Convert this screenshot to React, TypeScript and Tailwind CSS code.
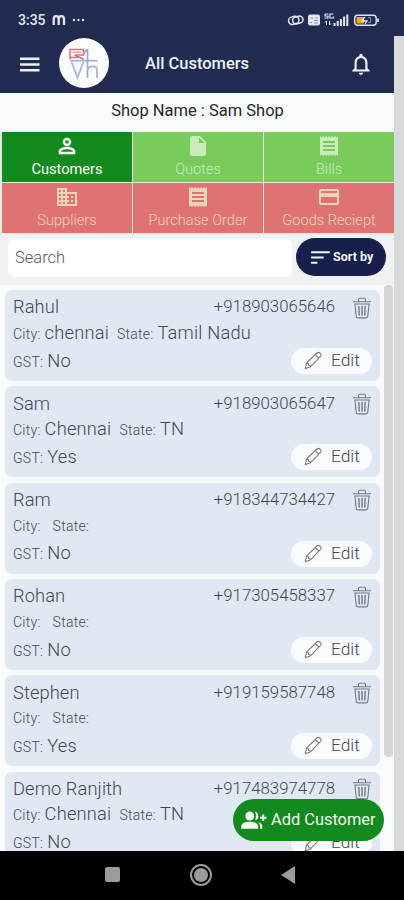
import { memo, type ReactNode } from "react";
import {
  MdCreditCard,
  MdDomain,
  MdInsertDriveFile,
  MdNotificationsNone,
  MdPersonOutline,
  MdReceipt,
  MdSort,
} from "react-icons/md";
import { clsx } from "clsx";

type Customer = {
  name: string;
  phone: string;
  city: string;
  state: string;
  gst: string;
};

const customers: Customer[] = [
  { name: "Rahul", phone: "+918903065646", city: "chennai", state: "Tamil Nadu", gst: "No" },
  { name: "Sam", phone: "+918903065647", city: "Chennai", state: "TN", gst: "Yes" },
  { name: "Ram", phone: "+918344734427", city: "", state: "", gst: "No" },
  { name: "Rohan", phone: "+917305458337", city: "", state: "", gst: "No" },
  { name: "Stephen", phone: "+919159587748", city: "", state: "", gst: "Yes" },
  { name: "Demo Ranjith", phone: "+917483974778", city: "Chennai", state: "TN", gst: "No" },
];

const tabs: { label: string; icon: ReactNode; className: string }[] = [
  {
    label: "Customers",
    icon: (
      <MdPersonOutline className="[&>path:not([fill=none])]:stroke-current [&>path:not([fill=none])]:stroke-[0.6px]" />
    ),
    className: "bg-[#128a1e] text-white",
  },
  { label: "Quotes", icon: <MdInsertDriveFile />, className: "bg-[#7acb5c] text-[#c9ecbb] font-light" },
  { label: "Bills", icon: <MdReceipt />, className: "bg-[#7acb5c] text-[#c9ecbb] font-light" },
  { label: "Suppliers", icon: <MdDomain />, className: "bg-[#df7374] text-[#ead5b8] font-light" },
  { label: "Purchase Order", icon: <MdReceipt />, className: "bg-[#df7374] text-[#ead5b8] font-light" },
  { label: "Goods Reciept", icon: <MdCreditCard />, className: "bg-[#df7374] text-[#ead5b8] font-light" },
];

const StatusBar = () => (
  <div className="h-[36px] shrink-0 flex items-center pt-[4px] pl-[18px] pr-[24px] bg-[#212b50] text-[#e3e6ee]">
    <span className="text-[14px] leading-none font-medium w-[28px]">3:35</span>
    <svg className="ml-[6px]" width="14" height="12" viewBox="0 0 14 12" fill="none" stroke="currentColor" strokeWidth="2.3">
      <path d="M1.7 11V5.2C1.7 1 6.7 1 6.7 5.2V11M6.7 5.2C6.7 1 12 1 12 5.2V11" />
    </svg>
    <svg className="ml-[6px] mb-px" width="14" height="4" viewBox="0 0 14 4" fill="currentColor">
      <circle cx="2" cy="2" r="1.2" />
      <circle cx="6.5" cy="2" r="1.2" />
      <circle cx="11" cy="2" r="1.2" />
    </svg>
    <svg className="ml-auto" width="93" height="16" viewBox="0 0 93 16" fill="none" stroke="currentColor">
      <g strokeWidth="1.5" transform="rotate(-15 9 8)">
        <rect x="1.5" y="4" width="10.5" height="7.5" rx="3.75" />
        <rect x="5.5" y="5" width="10.5" height="7" rx="3.5" />
      </g>
      <rect x="21" y="2.5" width="12" height="11" rx="2" fill="currentColor" stroke="none" />
      <path d="M23 6h3M28 6h3M23 10.5h2M27 8.5h4M27 11h4" stroke="#7d859c" strokeWidth=".8" />
      <path d="M38 2h3.5M38 2v2h3v2h-3.5M46.5 2h-3.5v4h3.5V4.5" strokeWidth="1.2" />
      <path d="M39.5 13v-4l-1.5 1.5M42.5 9v4l1.5-1.5" strokeWidth="1" />
      <path d="M47.5 14v-3M50.7 14V9M53.9 14V7M57.1 14V4.5M60.3 14V2.5" strokeWidth="2" />
      <rect x="67.7" y="3.2" width="21.5" height="10" rx="3" strokeWidth="1.4" />
      <path d="M69.5 5h7.5v6.5h-7.5z" fill="#f6a623" stroke="none" />
      <path d="M78 5l-3 4h5l-2 3" strokeWidth="1.3" />
      <path d="M81 5.5h2.5v5h-2.5" stroke="#8e96ae" />
      <path d="M91 6.5v3.5" strokeWidth="1.7" />
    </svg>
  </div>
);

const MenuIcon = () => (
  <svg width="20" height="15" viewBox="0 0 20 15" fill="none" stroke="currentColor" strokeWidth="2.4">
    <path d="M0 1.7h19.5M0 7.5h19.5M0 13.3h19.5" />
  </svg>
);

const Logo = () => (
  <div className="size-[50px] rounded-full bg-[#fdfdfe] grid place-items-center">
    <svg width="50" height="50" viewBox="0 0 50 50" fill="none">
      <path d="M11 21.5V11.5H24.5V17H15.5L25 21.5M11 19.5H18" stroke="#e0717c" strokeWidth="1.6" />
      <path d="M13.5 14.2H22" stroke="#e9939b" strokeWidth="1.4" />
      <path d="M28.5 11V40M28 11.5L23 18" stroke="#9aa9bf" strokeWidth="1.7" />
      <path d="M11 22.7H38.5" stroke="#a2b3c9" strokeWidth="1.8" />
      <path d="M12.5 24L18.5 39.5L24.5 24M28.5 32Q29.5 28.5 33 28.5H35Q38 28.5 38 31.5V40" stroke="#a9b9cd" strokeWidth="1.8" />
    </svg>
  </div>
);

const TrashIcon = () => (
  <svg width="20" height="22" viewBox="0 0 20 22" fill="none" stroke="#727b86" strokeWidth="1.1">
    <path d="M1 4.7h18M6.5 4.3V2.7q0-1.5 1.5-1.5h4q1.5 0 1.5 1.5v1.6" />
    <path d="M2.3 7h15.4M3 7.2l1.2 12q.2 1.7 1.9 1.7h7.8q1.7 0 1.9-1.7l1.2-12" />
    <path d="M6.8 9l.5 9.5M10 9v9.5M13.2 9l-.5 9.5" strokeWidth="1.4" />
  </svg>
);

const PencilIcon = () => (
  <svg className="mb-px" width="19" height="19" viewBox="0 0 19 19" fill="none" stroke="#7b7e82" strokeWidth="1.1" strokeLinejoin="round">
    <path d="M1.2 17.8l1.3-5.6L12.8 2q1.5-1.4 3.2.2 1.8 1.8.5 3.2L6.4 15.800z" />
    <path d="M11.3 3.5l3.7 3.7M2.5 12.2l1.8.4.4 1.6 1.4.3.3 1.3" />
  </svg>
);

const AddPeopleIcon = () => (
  <svg width="26" height="19" viewBox="0 0 26 19" fill="currentColor">
    <circle cx="8.8" cy="5" r="4.5" />
    <path d="M.3 17.8v-2.3C.3 12 4.5 10.8 8.8 10.8s8.4 1.2 8.4 4.7v2.3z" />
    <path d="M14 .8a4.3 4.3 0 010 8.4q2-4.2 0-8.4zM17 11.3q4.3 1.2 4.3 4v2.5h-2.2v-2.5q0-2.3-2.1-4z" />
    <path d="M21.3 3.5h1.9v2.3h2.3v1.9h-2.3V10h-1.9V7.7H19V5.8h2.3z" />
  </svg>
);

const Field = ({ label, value, className }: { label: string; value: string; className?: string }) => (
  <span className={clsx("flex items-baseline leading-[20px]", className)}>
    <span className="text-[14px] tracking-[0.25px]">{label}:</span>
    {value && <span className="ml-[4px] text-[18.3px] tracking-[0.2px]">{value}</span>}
  </span>
);

const CustomerCard = memo(({ customer }: { customer: Customer }) => (
  <div className="h-[91px] mb-[5.35px] shrink-0 rounded-[7px] bg-[#dfe8f3] px-[8px] text-[#3f4854] font-light">
    <div className="h-[30px] pt-[4px] flex items-center">
      <span className="text-[18.3px] tracking-[0.1px]">{customer.name}</span>
      <span className="ml-auto text-[16.8px]">{customer.phone}</span>
      <button className="ml-[17px] mt-px">
        <TrashIcon />
      </button>
    </div>
    <div className="h-[26px] flex items-center">
      <Field label="City" value={customer.city} />
      <Field label="State" value={customer.state} className={customer.city ? "ml-[8px]" : "ml-[12px]"} />
    </div>
    <div className="h-[30px] flex items-center justify-between">
      <Field label="GST" value={customer.gst} />
      <button className="w-[81px] h-[26px] rounded-full bg-[#fafbfd] flex items-center pl-[13px] gap-[8px] text-[17.3px]">
        <PencilIcon />
        Edit
      </button>
    </div>
  </div>
));

CustomerCard.displayName = "CustomerCard";

export default function App() {
  return (
    <div className="w-[404px] h-[900px] flex flex-col overflow-hidden bg-[#f9fafc] font-['Roboto',sans-serif]">
      <StatusBar />

      <div className="h-[815px] shrink-0 flex">
        <main className="relative w-[394px] flex flex-col">
          <header className="h-[57px] shrink-0 flex items-center pb-[3px] pl-[20px] pr-[20px] bg-[#212b50] text-[#eef0f5]">
            <button className="mt-[3px]">
              <MenuIcon />
            </button>
            <div className="ml-[19px]">
              <Logo />
            </div>
            <h1 className="ml-[36px] pt-[2px] text-[16.5px] font-medium">All Customers</h1>
            <MdNotificationsNone className="ml-auto mt-[2px]" size={26} />
          </header>

          <div className="h-[39px] shrink-0 flex items-center justify-center pb-[2px] pl-[1px] text-[16.5px] text-[#24262b]">
            Shop Name : Sam Shop
          </div>

          <nav className="h-[102px] shrink-0 grid grid-cols-3 grid-rows-2 gap-px pl-[2px] pb-px bg-[#e4eadf]">
            {tabs.map((tab) => (
              <button
                key={tab.label}
                className={clsx("flex flex-col items-center pt-[2px] text-[24px]", tab.className)}
              >
                {tab.icon}
                <span className="mt-px text-[14.6px] leading-[20px]">{tab.label}</span>
              </button>
            ))}
          </nav>

          <div className="h-[51px] shrink-0 flex items-start pt-[4px] pl-[8px] bg-[#f1f1f4]">
            <div className="w-[284px] h-[38px] mt-px rounded-[7px] bg-white flex items-center pl-[7px] text-[16.5px] font-light text-[#55585d]">
              Search
            </div>
            <button className="ml-[4px] w-[90px] h-[38px] rounded-full bg-[#17204c] text-[#f2f3f7] flex items-center pl-[12px] text-[12.5px] font-bold">
              <MdSort size={25} />
              Sort by
            </button>
          </div>

          <div className="h-[566px] flex overflow-hidden">
            <div className="w-[380px] pl-[5px] pt-[5px] flex flex-col">
              {customers.map((customer) => (
                <CustomerCard key={customer.phone} customer={customer} />
              ))}
            </div>
            <div className="ml-[4px] w-[9px] h-[472px] rounded-[4px] bg-[#d4d5d6]" />
          </div>

          <button className="absolute left-[233px] top-[763px] w-[151px] h-[42px] rounded-full bg-[#128a1e] text-[#f1f8f1] flex items-center pl-[8px] gap-[4px] text-[16.4px]">
            <AddPeopleIcon />
            Add Customer
          </button>
        </main>
        <div className="w-[10px] bg-[#d8d9da]" />
      </div>

      <footer className="h-[49px] shrink-0 bg-black flex items-center pb-[2px] pl-[105px] text-[#9b9b9b]">
        <div className="size-[15px] rounded-[2px] bg-current" />
        <div className="ml-[70px] size-[22px] rounded-full border-2 border-current grid place-items-center">
          <div className="size-[14px] rounded-full bg-current" />
        </div>
        <svg className="ml-[69px]" width="14" height="18" viewBox="0 0 14 18" fill="currentColor">
          <path d="M14 0v18L0 9z" />
        </svg>
      </footer>
    </div>
  );
}
